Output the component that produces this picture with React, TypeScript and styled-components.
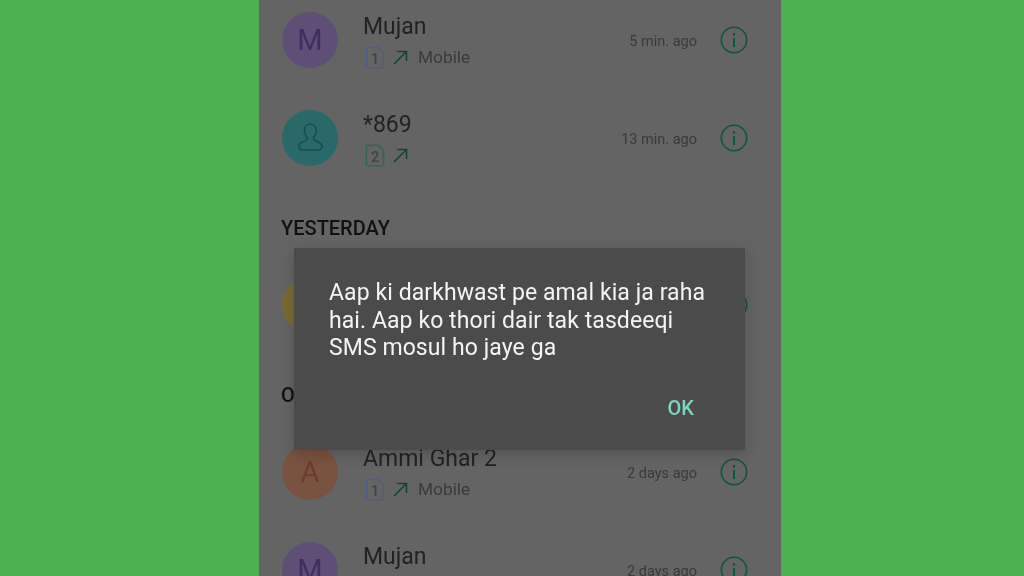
import React from 'react';
import styled, { createGlobalStyle } from 'styled-components';

interface Call {
  name: string;
  initial?: string;
  person?: boolean;
  tint: string;
  ink: string;
  sim?: number;
  simInk?: string;
  label?: string;
  time?: string;
}

const GlobalStyle = createGlobalStyle`
  html, body {
    margin: 0;
    height: 100%;
    overflow: hidden;
    background: #4caf50;
    font-family: Roboto, "Liberation Sans", sans-serif;
  }
`;

const SimIcon = ({ n, color }: { n: number; color: string }) => (
  <svg width="20" height="23" viewBox="0 0 20 23" fill="none">
    <path d="M2.500 1.200H13L18.500 6.500V20a1.800 1.800 0 0 1-1.800 1.800H3.200A1.800 1.800 0 0 1 1.400 20V2.300a1.100 1.100 0 0 1 1.100-1.100Z" stroke={color} strokeWidth="1.600" />
    <text x="10" y="17.500" textAnchor="middle" fontSize="14.500" fontWeight="500" fontFamily="Roboto, sans-serif" fill="#3a4547">
      {n}
    </text>
  </svg>
);

const OutgoingArrow = () => (
  <svg width="15" height="15" viewBox="0 0 15 15" fill="none" stroke="#134436" strokeWidth="1.600">
    <path d="M1 14 13.500 1.500" />
    <path d="M4 1.500h9.500V11" />
  </svg>
);

const InfoIcon = () => (
  <svg width="28" height="28" viewBox="0 0 28 28" fill="none" stroke="#0d5545">
    <circle cx="14" cy="14" r="12.700" strokeWidth="1.600" />
    <path d="M14 12v9" strokeWidth="2" />
    <path d="M14 7.200v2.400" strokeWidth="2.200" />
  </svg>
);

const PersonIcon = () => (
  <svg width="25" height="30" viewBox="0 0 25 30" fill="none" stroke="#174c56" strokeWidth="1.500">
    <path d="M12.500 1.200c3.700 0 5.800 2.700 5.800 6.300 0 2.900-1 5.200-2.400 6.800-.7.800-.6 2.400.5 3l4.300 1.900c2 .9 3.100 2.300 3.100 4.100 0 2.300-1.500 3.700-3.800 3.700H4.700C2.400 26.900.9 25.500.9 23.200c0-1.800 1.100-3.200 3.100-4.100l4.300-1.900c1.100-.6 1.200-2.200.5-3-1.400-1.600-2.400-3.900-2.400-6.800 0-3.600 2.100-6.300 5.800-6.300Z" />
  </svg>
);

const today: Call[] = [
  { name: 'Mujan', initial: 'M', tint: '#5f4f76', ink: '#3e2f62', sim: 1, simInk: '#525c88', label: 'Mobile', time: '5 min. ago' },
  { name: '*869', person: true, tint: '#28696a', ink: '#174c56', sim: 2, simInk: '#34635a', time: '13 min. ago' },
];

const older: Call[] = [
  { name: 'Ammi Ghar 2', initial: 'A', tint: '#7a5240', ink: '#6a3d30', sim: 1, simInk: '#525c88', label: 'Mobile', time: '2 days ago' },
  { name: 'Mujan', initial: 'M', tint: '#5f4f76', ink: '#3e2f62', sim: 1, simInk: '#525c88', label: 'Mobile', time: '2 days ago' },
];

const CallRow = ({ call }: { call: Call }) => (
  <Row>
    <Avatar $tint={call.tint} $ink={call.ink}>
      {call.person ? <PersonIcon /> : call.initial}
    </Avatar>
    <Details>
      <Name>{call.name}</Name>
      {call.sim && (
        <Meta>
          <SimIcon n={call.sim} color={call.simInk || '#525c88'} />
          <OutgoingArrow />
          <Label>{call.label}</Label>
        </Meta>
      )}
    </Details>
    <Time>{call.time}</Time>
    <InfoIcon />
  </Row>
);

const App = () => {
  return (
    <Page>
      <GlobalStyle />
      <Phone>
        <List>
          {today.map((call, index) => (
            <CallRow key={index} call={call} />
          ))}
          <Section>YESTERDAY</Section>
          <CallRow call={{ name: '', initial: '', tint: '#7a6a2e', ink: '#6d5c1c' }} />
          <Section>OLDER</Section>
          {older.map((call, index) => (
            <CallRow key={index} call={call} />
          ))}
        </List>
        <Dialog>
          <Message>Aap ki darkhwast pe amal kia ja raha hai. Aap ko thori dair tak tasdeeqi SMS mosul ho jaye ga</Message>
          <Actions>
            <OkButton>OK</OkButton>
          </Actions>
        </Dialog>
      </Phone>
    </Page>
  );
};

const Page = styled.div`
  height: 100vh;
  display: flex;
  justify-content: center;
  padding-left: 16px;
  box-sizing: border-box;
`;

const Phone = styled.div`
  position: relative;
  width: 522px;
  height: 576px;
  overflow: hidden;
  background: #646464;
`;

const List = styled.div`
  margin-top: -9px;
  filter: blur(0.6px);
`;

const Row = styled.div`
  height: 98px;
  box-sizing: border-box;
  display: flex;
  align-items: center;
  padding: 0 33px 0 23px;
`;

const Avatar = styled.div<{ $tint: string; $ink: string }>`
  width: 56px;
  height: 56px;
  border-radius: 50%;
  flex: none;
  display: flex;
  align-items: center;
  justify-content: center;
  background: ${(p) => p.$tint};
  color: ${(p) => p.$ink};
  font-size: 29px;
`;

const Details = styled.div`
  flex: 1;
  margin-left: 25px;
  padding-top: 3px;
  display: flex;
  flex-direction: column;
  gap: 5px;
`;

const Name = styled.div`
  font-size: 23px;
  line-height: 26px;
  color: #222222;
`;

const Meta = styled.div`
  display: flex;
  align-items: center;
  gap: 8px;
  height: 24px;
  padding-left: 2px;
`;

const Label = styled.span`
  margin-left: 2px;
  font-size: 17.300px;
  color: #3a3b3b;
`;

const Time = styled.div`
  margin: 2px 23px 0 0;
  font-size: 14.500px;
  color: #3a3a3a;
`;

const Section = styled.div`
  height: 69px;
  box-sizing: border-box;
  padding: 30px 0 0 22px;
  font-size: 20px;
  line-height: 22px;
  font-weight: 500;
  color: #111111;
`;

const Dialog = styled.div`
  position: absolute;
  left: 35px;
  top: 248px;
  width: 451px;
  height: 202px;
  box-sizing: border-box;
  padding: 31px 35px 0;
  display: flex;
  flex-direction: column;
  background: #4b4b4b;
  box-shadow: 0 4px 14px rgba(0, 0, 0, 0.18);
  filter: blur(0.4px);
`;

const Message = styled.div`
  font-size: 23px;
  line-height: 27.500px;
  letter-spacing: 0.08px;
  color: #f4f4f4;
`;

const Actions = styled.div`
  display: flex;
  justify-content: flex-end;
  margin-top: 33px;
`;

const OkButton = styled.div`
  margin-right: 16px;
  font-size: 20px;
  line-height: 26px;
  font-weight: 500;
  color: #7fd4bc;
`;

export default App;
